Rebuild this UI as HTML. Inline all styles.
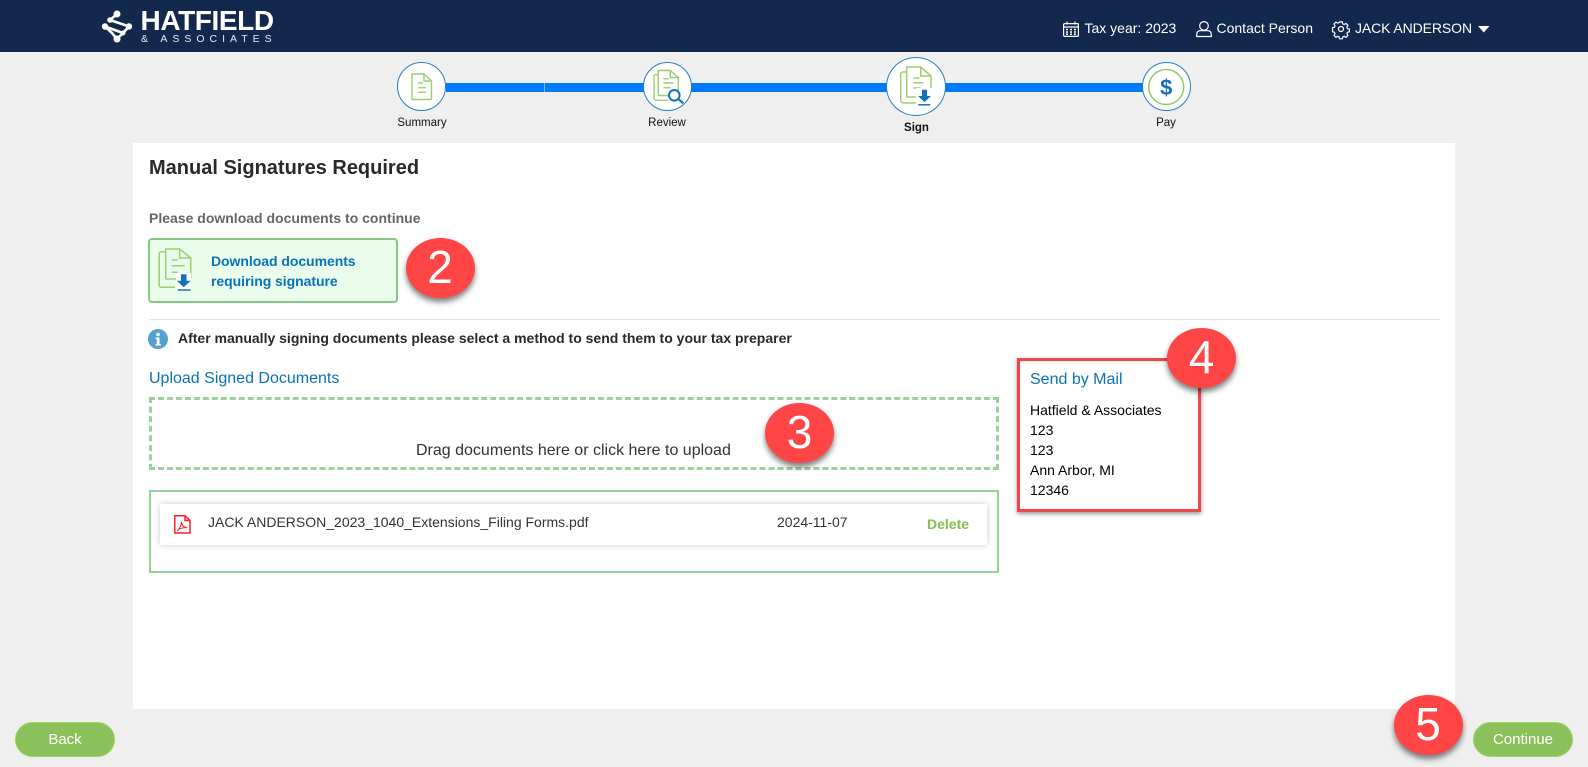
<!DOCTYPE html>
<html><head><meta charset="utf-8"><title>Manual Signatures Required</title>
<style>
html,body{margin:0;padding:0;width:1588px;height:767px;overflow:hidden;background:#efefef;font-family:"Liberation Sans",Arial,sans-serif;color:#212529}
.a{position:absolute;white-space:nowrap}
svg{position:absolute;overflow:visible}
.step{position:absolute;border-radius:50%;background:#fff;border:1.5px solid #2a7fba;box-sizing:border-box}
.lbl{position:absolute;font-size:11.5px;color:#111;text-align:center;width:100px;line-height:14px}
.badge{position:absolute;width:69px;height:60px;border-radius:50%;background:#ff4545;color:#fff;font-size:46px;line-height:58px;text-align:center;box-shadow:0 4px 6px rgba(0,0,0,.5)}
.btn{position:absolute;top:722px;width:100px;height:35px;box-sizing:border-box;border-radius:18px;background:#8bc15a;border:1px solid #9cd65f;color:#fff;font-size:15px;line-height:33px;text-align:center}
</style></head><body>
<div class="a" style="left:0;top:0;width:1588px;height:52px;background:#12294d"></div>
<svg style="left:0;top:0" width="300" height="52" fill="none" stroke="#fff">
<g stroke-width="2.600"><path d="M117 14L110 20L129 26.500L123 33L117 39M105 26.500L123 33M105 26.500L112 33L117 39"/></g>
<g fill="#fff" stroke="none"><circle cx="117" cy="14" r="3.500"/><circle cx="110" cy="20" r="2.800"/><circle cx="105" cy="26.500" r="3.200"/><circle cx="117" cy="39" r="3.500"/><circle cx="129" cy="26.500" r="3.200"/><circle cx="123" cy="33" r="2.500"/></g></svg>
<div class="a" style="left:140.500px;top:5px;font-size:28px;line-height:32px;font-weight:bold;color:#fff;letter-spacing:-.4px">HATFIELD</div>
<div class="a" style="left:141px;top:34px;font-size:10.5px;line-height:11px;color:#fff;letter-spacing:5px;opacity:.9">&amp; ASSOCIATES</div>

<svg style="left:1063px;top:21px" width="16" height="16" fill="none" stroke="#fff" stroke-width="1.200"><rect x=".6" y="2.600" width="14.800" height="12.800" rx="1"/><path d="M.6 6h14.800M4 .5v3M12 .5v3"/><path d="M3 8.500h2M7 8.500h2M11 8.500h2M3 11h2M7 11h2M11 11h2M3 13.300h2M7 13.300h2M11 13.300h2" stroke-width="1.500"/></svg>
<div class="a" style="left:1084.500px;top:20px;font-size:14px;line-height:16px;color:#fff">Tax year: 2023</div>
<svg style="left:1196px;top:21px" width="16" height="16" fill="none" stroke="#fff" stroke-width="1.200"><circle cx="8" cy="4.900" r="4.300"/><path d="M.7 15.500v-2.300a3.500 3.500 0 0 1 3.500-3.500h7.600a3.500 3.500 0 0 1 3.500 3.500v2.300z"/></svg>
<div class="a" style="left:1216.500px;top:20px;font-size:14px;line-height:16px;color:#fff">Contact Person</div>
<svg style="left:1333px;top:21px" width="16" height="16" fill="none" stroke="#fff" stroke-width="1.200"><circle cx="8" cy="8" r="2.500"/><path d="M6.600.7h2.800l.5 2.100 1.400.6 1.900-1.100 2 2-1.100 1.900.6 1.400 2 .5v2.800l-2 .5-.6 1.400 1.100 1.900-2 2-1.900-1.100-1.400.6-.5 2H6.600l-.5-2-1.400-.6-1.900 1.100-2-2 1.100-1.900-.6-1.400-2-.5V6.700l2-.5.6-1.400L.8 2.900l2-2 1.900 1.100 1.400-.6z" transform="translate(.2 .2) scale(.97)"/></svg>
<div class="a" style="left:1355px;top:20px;font-size:14px;line-height:16px;color:#fff;letter-spacing:-.1px">JACK ANDERSON</div>
<svg style="left:1478px;top:26px" width="12" height="7"><path d="M0 0h11.500L5.750 6.500z" fill="#fff"/></svg>

<div class="a" style="left:446px;top:83px;width:698px;height:9px;background:#007bff"></div>
<div class="a" style="left:544px;top:83px;width:1px;height:9px;background:#7fb9f5"></div>

<div class="step" style="left:397px;top:62px;width:49px;height:49px"></div>
<svg style="left:397px;top:62px" width="49" height="49" fill="none" stroke="#9ccf70" stroke-width="1.400"><path d="M15 12h12l7.500 7v17.500a1 1 0 0 1-1 1H16a1 1 0 0 1-1-1z"/><path d="M27 12v7h7.500"/><path d="M21 21h5M21 25.700h8M21 30.300h8"/></svg>

<div class="step" style="left:643px;top:62px;width:49px;height:49px"></div>
<svg style="left:643px;top:62px" width="49" height="49" fill="none" stroke="#9ccf70" stroke-width="1.400"><path d="M15.300 8.500h12l8 7v17a1 1 0 0 1-1 1H16.300a1 1 0 0 1-1-1z"/><path d="M27.300 8.500v7h8"/><path d="M20.500 16.700h5M20.500 21h10M20.500 25.700h7"/><path d="M15 12.700h-2.500a1.500 1.500 0 0 0-1.500 1.500V36a2.300 2.300 0 0 0 2.300 2.300H25"/><circle cx="31.300" cy="33.300" r="5.300" fill="#fff" stroke="#1272b8" stroke-width="2"/><path d="M35.300 37l5 4.300" stroke="#1272b8" stroke-width="2.200"/></svg>

<div class="step" style="left:886px;top:57px;width:60px;height:59px"></div>
<svg style="left:886px;top:57px" width="60" height="59" fill="none" stroke="#9ccf70" stroke-width="1.500"><path d="M20.700 10h14l10.300 9v20a1 1 0 0 1-1 1H21.700a1 1 0 0 1-1-1z"/><path d="M34.700 10v9h10.300"/><path d="M27.300 21h6M27.300 25.700h10M27.300 31h7"/><path d="M20 15h-3a2.300 2.300 0 0 0-2.300 2.300V43a3 3 0 0 0 3 3H32"/><rect x="30" y="31" width="18" height="19" fill="#fff" stroke="none"/><path d="M36 32.700h5V39h4l-6.500 6L32 39h4z" fill="#1272b8" stroke="none"/><path d="M32.300 47.800h12" stroke="#1272b8" stroke-width="1.500"/></svg>

<div class="step" style="left:1142px;top:62px;width:49px;height:49px"></div>
<svg style="left:1142px;top:62px" width="49" height="49"><circle cx="24.200" cy="25" r="17.500" fill="none" stroke="#8fcb66" stroke-width="1.500"/><text x="24.200" y="33" text-anchor="middle" font-family="Liberation Sans" font-weight="bold" font-size="22" fill="#1272b8">$</text></svg>

<div class="lbl" style="left:372px;top:116px">Summary</div>
<div class="lbl" style="left:617px;top:116px">Review</div>
<div class="lbl" style="left:866.500px;top:121px;font-weight:bold">Sign</div>
<div class="lbl" style="left:1116px;top:116px">Pay</div>

<div class="a" style="left:133px;top:143px;width:1322px;height:566px;background:#fff"></div>
<div class="a" style="left:149px;top:156px;font-size:20px;line-height:24px;font-weight:bold;color:#292929">Manual Signatures Required</div>
<div class="a" style="left:149px;top:210px;font-size:14px;line-height:16px;font-weight:bold;color:#666">Please download documents to continue</div>

<div class="a" style="left:148px;top:238px;width:250px;height:65px;box-sizing:border-box;background:#eafded;border:2px solid #85c985;border-radius:4px"></div>
<svg style="left:148px;top:238px" width="50" height="64" fill="none" stroke="#9ccf70" stroke-width="1.500"><path d="M17.700 11h14l11 9v20a1 1 0 0 1-1 1H18.700a1 1 0 0 1-1-1z"/><path d="M31.700 11v9h11"/><path d="M23.700 22h6M23.700 27.700h13M23.700 34.300h6"/><path d="M17 13.700h-3.500a2.300 2.300 0 0 0-2.300 2.300v31a2.300 2.300 0 0 0 2.300 2.300H27"/><rect x="28" y="35" width="15" height="18" fill="#fff" stroke="none"/><path d="M33 36.300h5.500v6.500h4.200l-7 6.500-7-6.500H33z" fill="#1272b8" stroke="none"/><path d="M29.700 52h13" stroke="#1272b8" stroke-width="1.500"/></svg>
<div class="a" style="left:211px;top:251px;font-size:14px;line-height:20px;font-weight:bold;color:#0a72b8;letter-spacing:-.05px">Download documents<br>requiring signature</div>
<div class="badge" style="left:405.500px;top:238px">2</div>

<div class="a" style="left:149px;top:319px;width:1291px;height:1px;background:#e3e3e3"></div>
<svg style="left:148px;top:329px" width="20" height="20"><circle cx="10" cy="10" r="10" fill="#55a0d3"/><circle cx="10" cy="5.500" r="1.800" fill="#fff"/><path d="M7.500 8.500h4v6.500h1.300v1.500H7.500V15h1.300v-5H7.500z" fill="#fff"/></svg>
<div class="a" style="left:178px;top:330px;font-size:14px;line-height:16px;font-weight:bold;color:#292929">After manually signing documents please select a method to send them to your tax preparer</div>

<div class="a" style="left:149px;top:370px;font-size:16px;line-height:18px;color:#0a72b8">Upload Signed Documents</div>
<div class="a" style="left:149px;top:397px;width:850px;height:73px;box-sizing:border-box;border:3px dashed #9ad29a"></div>
<div class="a" style="left:416px;top:442px;font-size:16px;line-height:18px;color:#333">Drag documents here or click here to upload</div>
<div class="badge" style="left:765px;top:403px">3</div>

<div class="a" style="left:149px;top:490px;width:850px;height:83px;box-sizing:border-box;border:2px solid #96d396"></div>
<div class="a" style="left:160px;top:504px;width:827px;height:41px;background:#fff;box-shadow:0 0 6px rgba(0,0,0,.22)"></div>
<svg style="left:174px;top:515px" width="18" height="20" fill="none" stroke="#f5222d" stroke-width="1.500"><path d="M.8.8h10.200L16 5.500V18H.8z"/><path d="M11 .8v4.700h5"/><path d="M3 15.800c3-2 4.500-6 4.500-9 0 3 2 5.500 5.500 6-3-.5-7 .5-10 3z" stroke-width="1"/></svg>
<div class="a" style="left:208px;top:514px;font-size:14px;line-height:16px;color:#333">JACK ANDERSON_2023_1040_Extensions_Filing Forms.pdf</div>
<div class="a" style="left:777px;top:514px;font-size:14px;line-height:16px;color:#333">2024-11-07</div>
<div class="a" style="left:927px;top:516px;font-size:14px;line-height:16px;font-weight:bold;color:#83bf4f">Delete</div>

<div class="a" style="left:1030px;top:371px;font-size:16px;line-height:18px;color:#0a72b8">Send by Mail</div>
<div class="a" style="left:1030px;top:400px;font-size:14px;line-height:20px;color:#000">Hatfield &amp; Associates<br>123<br>123<br>Ann Arbor, MI<br>12346</div>
<div class="a" style="left:1017px;top:358px;width:184px;height:154px;box-sizing:border-box;border:3px solid #f0474a;box-shadow:0 2px 4px rgba(0,0,0,.4), inset 0 1px 2px rgba(0,0,0,.12)"></div>
<div class="badge" style="left:1167px;top:328px">4</div>

<div class="btn" style="left:15px">Back</div>
<div class="btn" style="left:1473px">Continue</div>
<div class="badge" style="left:1393.500px;top:695px">5</div>
</body></html>
